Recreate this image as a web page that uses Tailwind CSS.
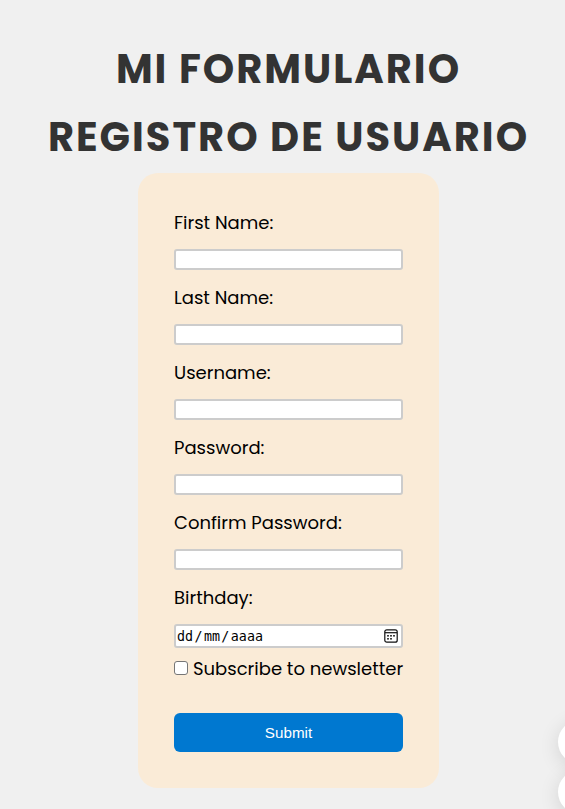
<!DOCTYPE html>
<html lang="es">
<head>
<meta charset="utf-8">
<title>Mi formulario</title>
<script src="https://cdn.jsdelivr.net/npm/@tailwindcss/browser@4"></script>
</head>
<body class="relative h-[809px] overflow-hidden bg-[#f0f0f0] font-[Poppins,Inter,sans-serif] text-black">
<main class="flex flex-col items-center pl-3 pt-[35px]">
  <h1 class="flex h-[138px] w-full flex-col items-center text-[40px] font-bold leading-[68px] tracking-[2px] text-[#333] whitespace-nowrap">
    <span>MI FORMULARIO</span>
    <span>REGISTRO DE USUARIO</span>
  </h1>
  <form class="flex h-[615px] w-[301px] flex-col rounded-[20px] bg-[#faebd7] p-9 text-[18px] leading-[27px] whitespace-nowrap">
    <label for="a">First Name:</label>
    <input id="a" class="mt-[13px] mb-3.5 h-[21px] shrink-0 rounded-[3px] border-2 border-[#ccc] bg-white">
    <label for="b">Last Name:</label>
    <input id="b" class="mt-[13px] mb-3.5 h-[21px] shrink-0 rounded-[3px] border-2 border-[#ccc] bg-white">
    <label for="c">Username:</label>
    <input id="c" class="mt-[13px] mb-3.5 h-[21px] shrink-0 rounded-[3px] border-2 border-[#ccc] bg-white">
    <label for="d">Password:</label>
    <input id="d" type="password" class="mt-[13px] mb-3.5 h-[21px] shrink-0 rounded-[3px] border-2 border-[#ccc] bg-white">
    <label for="e">Confirm Password:</label>
    <input id="e" type="password" class="mt-[13px] mb-3.5 h-[21px] shrink-0 rounded-[3px] border-2 border-[#ccc] bg-white">
    <span>Birthday:</span>
    <div class="mt-[13px] mb-[7px] flex h-6 shrink-0 items-center justify-between rounded-[3px] border-2 border-[#ccc] bg-white pl-px pr-[3px] font-['DejaVu_Sans_Mono',monospace] text-[13.33px] leading-5">
      <div class="flex pt-0.5"><span>dd</span><span class="mx-[1.4px]">/</span><span>mm</span><span class="mx-[1.4px]">/</span><span class="tracking-[0.1px]">aaaa</span></div>
      <svg class="-mt-px size-[14px]" viewBox="0 0 14 14" fill="none" stroke="#111" stroke-width="1.2"><rect x="0.8" y="0.8" width="12.4" height="12.4" rx="2"/><path d="M1 3.7h12"/><g fill="#111" stroke="none"><rect x="3.2" y="6" width="1.6" height="1.6"/><rect x="6.2" y="6" width="1.6" height="1.6"/><rect x="9.2" y="6" width="1.6" height="1.6"/><rect x="3.2" y="9" width="1.6" height="1.6"/><rect x="6.2" y="9" width="1.6" height="1.6"/></g></svg>
    </div>
    <label class="flex h-[27px] shrink-0"><input type="checkbox" class="mt-1.5 mr-[5px] size-3.5 shrink-0 appearance-none rounded-[3px] border border-[#767676] bg-white"><span>Subscribe to newsletter</span></label>
    <button type="button" class="mt-[31px] h-[39px] shrink-0 rounded-md bg-[#0078d0] font-['Liberation_Sans',Arial,sans-serif] text-[15.2px] leading-[39px] text-white">Submit</button>
  </form>
</main>
<div class="pointer-events-none absolute right-0 bottom-0 flex h-[150px] w-[60px] flex-col gap-1.5 overflow-hidden pl-[53px] pt-[61px]">
  <div class="size-11 shrink-0 rounded-full bg-white shadow-[0_4px_20px_rgba(0,0,0,0.12)]"></div>
  <div class="size-11 shrink-0 rounded-full bg-white shadow-[0_4px_20px_rgba(0,0,0,0.12)]"></div>
</div>
</body>
</html>
